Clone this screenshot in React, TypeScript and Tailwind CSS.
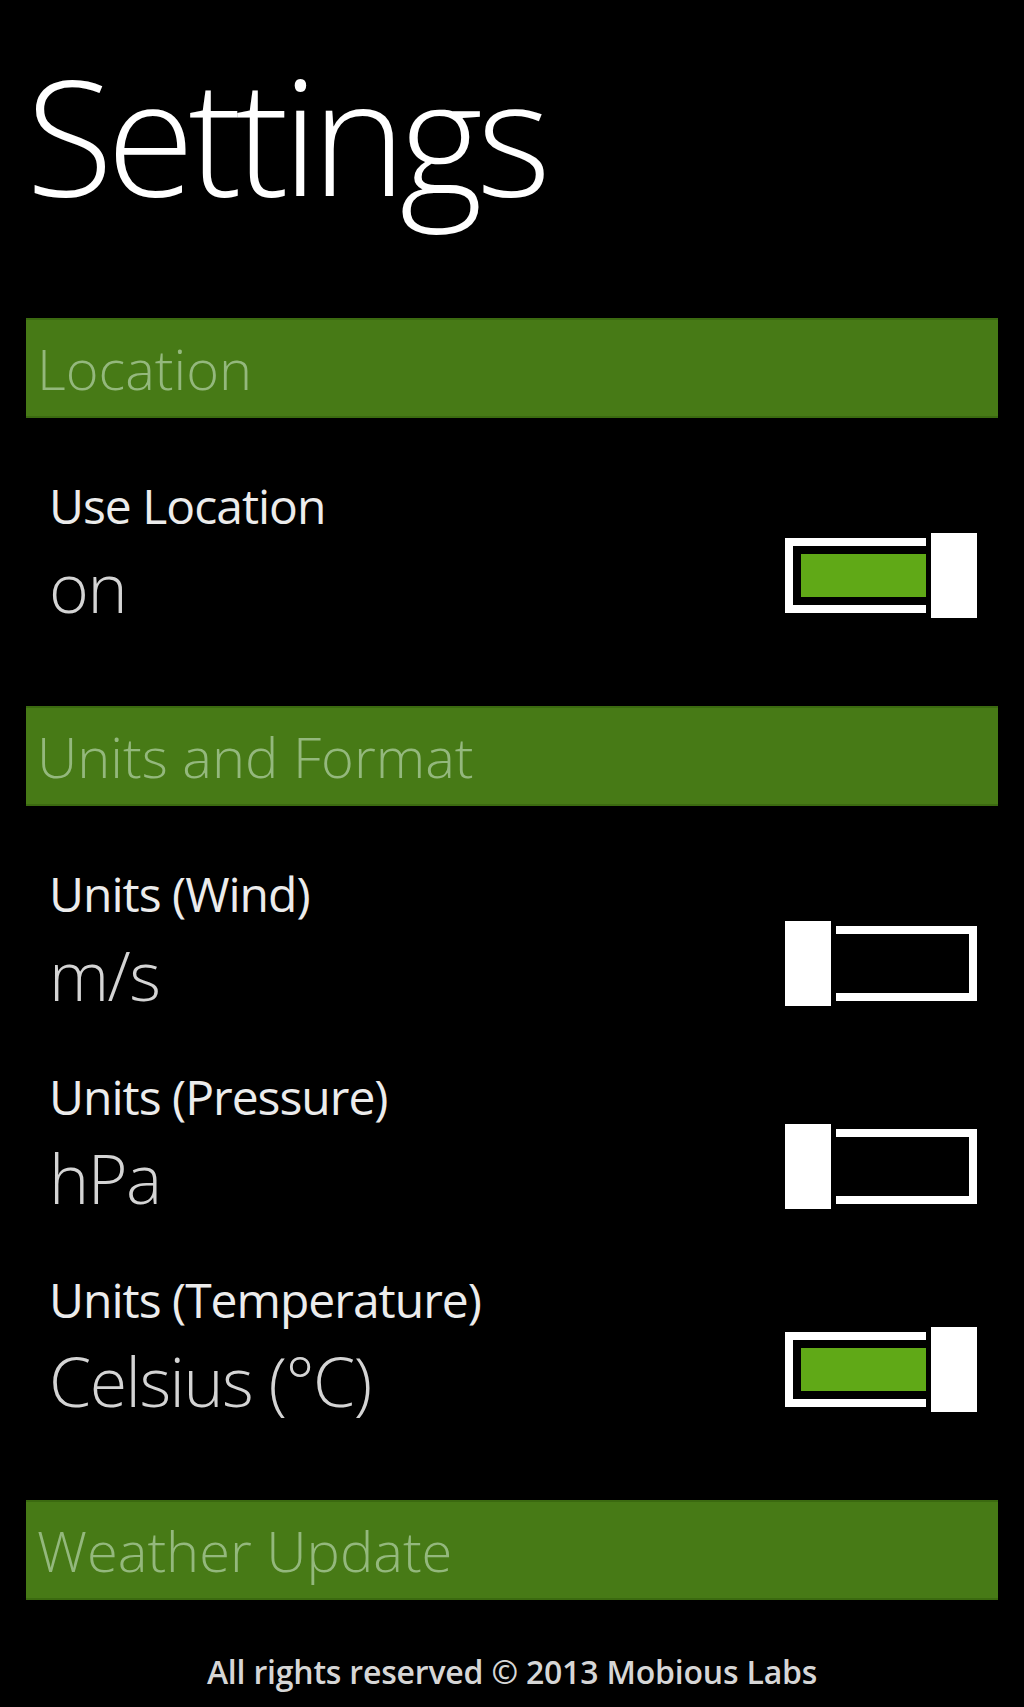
import React from "react";

function Toggle({ on }: { on: boolean }) {
  return (
    <div className="relative w-[192px] h-[85px] shrink-0">
      <div className="absolute left-0 right-0 top-[5px] bottom-[5px] border-[8px] border-white bg-black p-[8px]">
        <div className={on ? "w-full h-full bg-[#60a917]" : "w-full h-full bg-black"} />
      </div>
      {on ? (
        <div className="absolute top-0 bottom-0 right-0 w-[51px] border-l-[5px] border-black bg-white" />
      ) : (
        <div className="absolute top-0 bottom-0 left-0 w-[51px] border-r-[5px] border-black bg-white" />
      )}
    </div>
  );
}

function Header({ title }: { title: string }) {
  return (
    <div className="mx-[26px] h-[100px] bg-[#477a16] border-y-2 border-[#3b6a10] pl-[11px] text-[56px] leading-[96px] font-light tracking-[0px] text-[#94b87d]">
      {title}
    </div>
  );
}

function Row({ label, value, on }: { label: string; value: string; on: boolean }) {
  return (
    <div className="flex justify-between items-start pl-[49px] pr-[47px] h-[139px]">
      <div className="flex flex-col">
        <div className="text-[48px] leading-[48px] text-[#ececec] tracking-[-1px]">{label}</div>
        <div className="mt-[23px] text-[68px] leading-[68px] font-light text-[#d4d4d4] tracking-[-1.5px]">{value}</div>
      </div>
      <div className="mt-[51px]">
        <Toggle on={on} />
      </div>
    </div>
  );
}

export default function App() {
  return (
    <div
      className="w-[1024px] h-[1707px] bg-black overflow-hidden flex flex-col"
      style={{ fontFamily: '"Open Sans", "Noto Sans", sans-serif' }}
    >
      <div className="mt-[54px] pl-[26px] text-[160px] leading-[160px] font-light text-white tracking-[-6.5px]">
        Settings
      </div>

      <div className="mt-[104px]">
        <Header title="Location" />
      </div>
      <div className="pt-[64px] pb-[85px]">
        <Row label="Use Location" value="on" on={true} />
      </div>

      <Header title="Units and Format" />
      <div className="pt-[64px] pb-[85px] flex flex-col gap-[64px]">
        <Row label="Units (Wind)" value="m/s" on={false} />
        <Row label="Units (Pressure)" value="hPa" on={false} />
        <Row label="Units (Temperature)" value="Celsius (°C)" on={true} />
      </div>

      <Header title="Weather Update" />

      <div className="mt-[56px] text-center text-[32px] leading-[32px] font-semibold text-[#d6d6d6] tracking-[-0.2px]">
        All rights reserved © 2013 Mobious Labs
      </div>
    </div>
  );
}
